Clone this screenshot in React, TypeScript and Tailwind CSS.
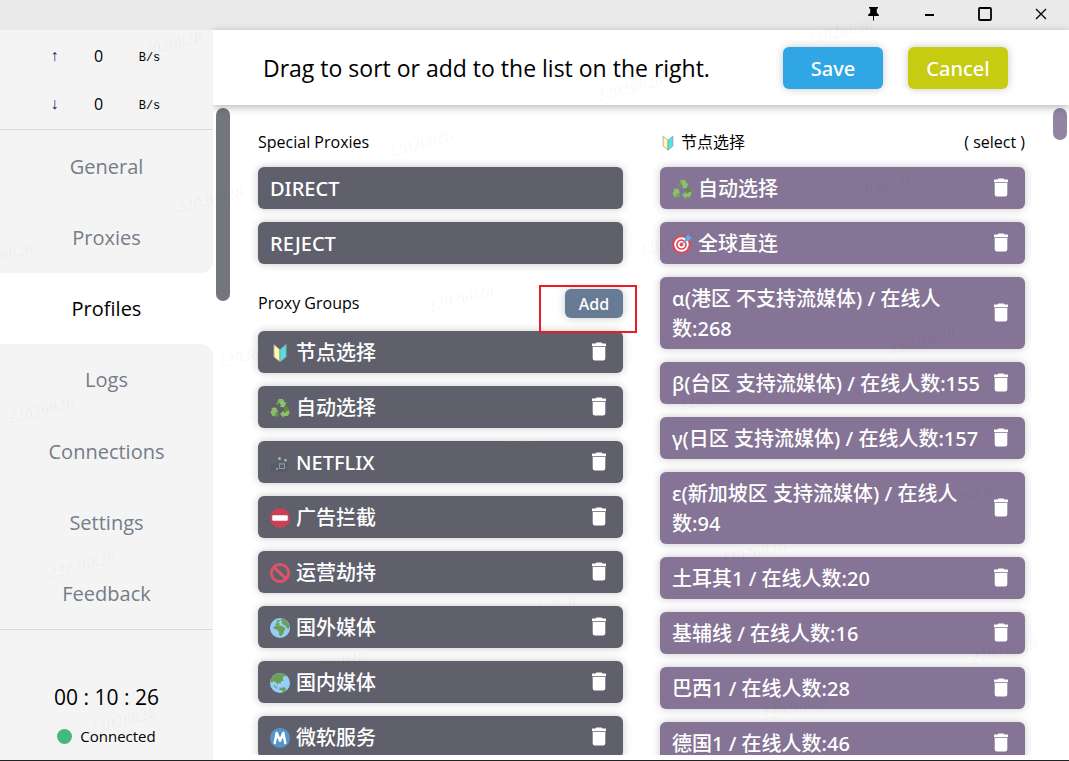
import type { ReactNode } from "react";

function Beginner() {
  return (
    <>
      <path fill="#fffcab" stroke="#8a99a3" strokeWidth="1.6" d="M7 2.5 18 12v22L7 25z" />
      <path fill="#50e3dc" stroke="#8a99a3" strokeWidth="1.6" d="M29 2.5 18 12v22l11-9z" />
    </>
  );
}

function Recycle() {
  return (
    <>
      <path fill="#5c913b" d="m11 10 4.500-8h7l-3 1.500-5.500 9.500zM34.500 22 31 15l-6.500 3.500 3.500 6.500h6zM5 33l-4-7 1-5 6.500 3.500 2.500 3-1 5.500z" />
      <path fill="#8cc06c" d="M15.500 2H23l4 6.500 3-1.500-4 9.500-9-.500 3-2-4.500-7.500zM28 25l6.500-3 .500 5-3 5.500h-7v3.500l-7-7 7-6.500V26h3zM5 33l-4-7 3.500-6L1.500 18 11 17l4 9-3-1.500-4 7z" />
      <path fill="#77b255" d="m11 10 4.500-8 4 2-5.500 9.500zM6 26h9v7.500H6z" opacity=".55" />
    </>
  );
}

function Camera() {
  return (
    <>
      <path fill="#3e4f57" opacity=".25" d="m2 18 8 4v8l-8 4zM10 18h23v14a2 2 0 0 1-2 2H12a2 2 0 0 1-2-2z" />
      <circle cx="17" cy="10" r="6.500" fill="#586069" />
      <circle cx="28" cy="13" r="5.500" fill="#586069" />
      <circle cx="17" cy="10" r="2.800" fill="#a5b1bb" />
      <circle cx="28" cy="13" r="2.500" fill="#a5b1bb" />
      <path fill="none" stroke="#8899a6" strokeWidth="2" d="M17 19.500h9v8.500h-9z" />
      <path fill="#a5b1bb" d="M11 27h3v3h-3z" />
    </>
  );
}

function NoEntry() {
  return (
    <>
      <circle cx="18" cy="18" r="18" fill="#cb4054" />
      <rect x="4" y="13" width="28" height="10" rx="2" fill="#fff" />
    </>
  );
}

function Prohibited() {
  return (
    <path
      fill="#e15266"
      d="M18 0C8.059 0 0 8.059 0 18s8.059 18 18 18 18-8.059 18-18S27.941 0 18 0zm13 18c0 2.565-.753 4.950-2.035 6.965L11.036 7.036C13.050 5.753 15.435 5 18 5c7.180 0 13 5.821 13 13zM5 18c0-2.565.753-4.950 2.036-6.964l17.929 17.929C22.950 30.247 20.565 31 18 31c-7.179 0-13-5.820-13-13z"
    />
  );
}

function GlobeAfrica() {
  return (
    <>
      <circle cx="18" cy="18" r="18" fill="#93cff6" />
      <path fill="#6d9f58" d="M20 1c8 1 13 7 15 14l-1 5-3-1-3-5-4-2-3-3 1-3-3-2zM12 5l4-2 2 2-3 3-3 1zM8 15c3-2 7-3 11-1 2 1 5 1 7 3l2 3-3 4-1 4-4 5-3-1-1-7-3-4-5-1-2-3z" />
      <path fill="#6d9f58" d="m10 10 5-1 4 2-5 2-4 0z" />
    </>
  );
}

function GlobeAsia() {
  return (
    <>
      <circle cx="18" cy="18" r="18" fill="#93cff6" />
      <path fill="#6d9f58" d="M4 8C8 2 15-1 22 1c5 1 6 3 7 5l-4 0-2 3 1 5-4 1-1 4-4-1-1 4-3-5-4-2-4 2-3-2c0-4 1-5 4-7zM8 21l3 4 4 3-5-1-3-4zM17 26l4 1 3-2 4 2 1 4c-2 2-3 3-5 3l-3-3-4-1z" />
    </>
  );
}

function CircledM() {
  return (
    <>
      <circle cx="18" cy="18" r="18" fill="#5595cb" />
      <path fill="none" stroke="#fff" strokeWidth="4.500" strokeLinecap="round" strokeLinejoin="round" d="m8.500 27 3.500-18 6 14 6-14 3.500 18" />
    </>
  );
}

function Target() {
  return (
    <>
      <circle cx="17" cy="19" r="17" fill="#dd4a5e" />
      <circle cx="17" cy="19" r="13" fill="#fff" />
      <circle cx="17" cy="19" r="9.500" fill="#dd4a5e" />
      <circle cx="17" cy="19" r="6.500" fill="#fff" />
      <circle cx="17" cy="19" r="3.500" fill="#dd4a5e" />
      <path stroke="#8a93a8" strokeWidth="2" d="m17 19 10-10" />
      <path fill="#5daeea" d="m24 12-1-5 7-7 1 5 5 1-7 7z" />
    </>
  );
}

function Emoji({ children, className = "size-5" }: { children: ReactNode; className?: string }) {
  return (
    <svg viewBox="0 0 36 36" className={`${className} shrink-0`} aria-hidden="true">
      {children}
    </svg>
  );
}

function Trash() {
  return (
    <svg viewBox="0 0 16 20" className="h-5 w-4" fill="currentColor" aria-hidden="true">
      <path d="M5.500.5h5l1 1h3c.3 0 .5.200.5.500v2.300H1V2c0-.3.200-.5.500-.5h3z" />
      <path d="M1.700 4.900h12.600v11.400a2.200 2.200 0 0 1-2.200 2.200H3.900a2.200 2.200 0 0 1-2.200-2.200z" />
    </svg>
  );
}

type Entry = { name: string; icon?: ReactNode };

function EntryRow({ entry, color, removable = true }: { entry: Entry; color: string; removable?: boolean }) {
  return (
    <li className={`${color} flex items-center rounded-md pr-4 pl-3 text-white shadow-[0_0_8px_rgba(0,0,0,0.22)]`}>
      <span className="flex flex-1 items-center gap-[6px] pt-[7px] pb-[5px] font-['Noto_Sans','Noto_Sans_CJK_SC',sans-serif] text-xl leading-[30px] font-medium">
        {entry.icon && <Emoji>{entry.icon}</Emoji>}
        <span>{entry.name}</span>
      </span>
      {removable && (
        <button type="button" aria-label={`Remove ${entry.name}`} className="shrink-0">
          <Trash />
        </button>
      )}
    </li>
  );
}

const special: Entry[] = [{ name: "DIRECT" }, { name: "REJECT" }];

const groups: Entry[] = [
  { name: "节点选择", icon: <Beginner /> },
  { name: "自动选择", icon: <Recycle /> },
  { name: "NETFLIX", icon: <Camera /> },
  { name: "广告拦截", icon: <NoEntry /> },
  { name: "运营劫持", icon: <Prohibited /> },
  { name: "国外媒体", icon: <GlobeAfrica /> },
  { name: "国内媒体", icon: <GlobeAsia /> },
  { name: "微软服务", icon: <CircledM /> },
];

const selected: Entry[] = [
  { name: "自动选择", icon: <Recycle /> },
  { name: "全球直连", icon: <Target /> },
  { name: "α(港区 不支持流媒体) / 在线人数:268" },
  { name: "β(台区 支持流媒体) / 在线人数:155" },
  { name: "γ(日区 支持流媒体) / 在线人数:157" },
  { name: "ε(新加坡区 支持流媒体) / 在线人数:94" },
  { name: "土耳其1 / 在线人数:20" },
  { name: "基辅线 / 在线人数:16" },
  { name: "巴西1 / 在线人数:28" },
  { name: "德国1 / 在线人数:46" },
];

const tabs = ["General", "Proxies", "Profiles", "Logs", "Connections", "Settings", "Feedback"];
const active = 2;

function tabShape(i: number) {
  if (i === active) return "bg-white text-black";
  if (i === active - 1) return "rounded-br-xl bg-[#f4f4f4] text-[#757d88]";
  if (i === active + 1) return "rounded-tr-xl bg-[#f4f4f4] text-[#757d88]";
  return "bg-[#f4f4f4] text-[#757d88]";
}

function TitleBar() {
  return (
    <div className="flex h-[30px] shrink-0 items-start justify-end bg-[#eaeaea]">
      <button type="button" aria-label="Pin" className="flex h-7 w-14 items-center justify-center">
        <svg viewBox="0 0 12 14" className="h-[14px] w-3" aria-hidden="true">
          <path d="M2 0h9v1.500H9.800V6c1.200.600 1.900 1.400 2.200 3H7v4.500H6V9H1c.3-1.600 1-2.400 2.200-3V1.500H2z" />
        </svg>
      </button>
      <button type="button" aria-label="Minimize" className="flex h-7 w-14 items-center justify-center">
        <svg viewBox="0 0 14 14" className="size-[14px]" aria-hidden="true">
          <path d="M3 7h9v2H3z" />
        </svg>
      </button>
      <button type="button" aria-label="Maximize" className="flex h-7 w-14 items-center justify-center">
        <svg viewBox="0 0 14 14" className="size-[14px]" aria-hidden="true">
          <rect x="1" y="1" width="12" height="12" rx="1" fill="none" stroke="#000" strokeWidth="1.800" />
        </svg>
      </button>
      <button type="button" aria-label="Close" className="flex h-7 w-14 items-center justify-center">
        <svg viewBox="0 0 14 14" className="size-[14px]" aria-hidden="true">
          <path d="m2 2 10 10M12 2 2 12" stroke="#000" strokeWidth="1.300" />
        </svg>
      </button>
    </div>
  );
}

function Speed({ arrow }: { arrow: string }) {
  return (
    <div className="grid h-12 grid-cols-[28px_60px_42px] items-center justify-center text-center">
      <span className="font-['Liberation_Sans'] text-base text-[#1c1c66]">{arrow}</span>
      <span className="text-base">0</span>
      <span className="pt-[3px] font-['Liberation_Mono'] text-xs">B/s</span>
    </div>
  );
}

function Sidebar() {
  return (
    <aside className="relative z-20 flex w-[213px] shrink-0 flex-col">
      <div className="h-[100px] border-b border-[#dbdbdb] bg-[#f4f4f4] pt-[2px] pr-[2px]">
        <Speed arrow="↑" />
        <Speed arrow="↓" />
      </div>
      <nav className="flex flex-1 flex-col bg-white">
        {tabs.map((tab, i) => (
          <a key={tab} href={`#${tab.toLowerCase()}`} className={`flex flex-1 items-center justify-center pt-[2px] text-xl ${tabShape(i)}`}>
            {tab}
          </a>
        ))}
      </nav>
      <div className="flex h-[131px] flex-col items-center border-t border-[#dbdbdb] bg-[#f4f4f4] pt-[52px]">
        <p className="text-[21px] leading-[30px]">00 : 10 : 26</p>
        <p className="mt-3 flex items-center gap-2 text-[15px] leading-6">
          <span className="size-[15px] rounded-full bg-[#43b883]" />
          Connected
        </p>
      </div>
    </aside>
  );
}

function Watermark() {
  const marks: { x: number; y: number }[] = [];
  for (let i = -3; i <= 8; i++) {
    for (let j = -3; j <= 6; j++) {
      const x = 176 + 41 * i + 210 * j;
      const y = 188 + 155 * i - 56 * j;
      if (x > -50 && x < 1040 && y > -12 && y < 750) marks.push({ x, y });
    }
  }
  return (
    <div className="pointer-events-none absolute inset-0 z-30 overflow-hidden" aria-hidden="true">
      {marks.map(({ x, y }) => (
        <span
          key={`${x},${y}`}
          className="absolute -rotate-14 font-['Liberation_Serif'] text-[17px] leading-6 font-bold text-black/3 italic"
          style={{ left: x, top: y }}
        >
          22026828
        </span>
      ))}
    </div>
  );
}

export default function App() {
  return (
    <div className="relative flex h-screen flex-col overflow-hidden border-b border-[#222] bg-white font-['Open_Sans','Noto_Sans_CJK_SC',sans-serif] text-black">
      <TitleBar />
      <div className="flex min-h-0 flex-1">
        <Sidebar />
        <main className="flex min-w-0 flex-1 flex-col">
          <header className="relative z-10 flex h-[75px] shrink-0 items-center bg-white pr-[61px] pl-[50px] shadow-[0_2px_8px_rgba(0,0,0,0.3)]">
            <h1 className="flex-1 pt-[2px] text-[23px] whitespace-nowrap">Drag to sort or add to the list on the right.</h1>
            <div className="flex gap-[25px] font-['Noto_Sans'] text-xl font-medium text-white">
              <button type="button" className="h-[42px] w-[100px] rounded-md bg-[#30a7e4] pt-[2px] shadow-[0_0_8px_rgba(0,0,0,0.22)]">
                Save
              </button>
              <button type="button" className="h-[42px] w-[100px] rounded-md bg-[#c7cb11] pt-[2px] shadow-[0_0_8px_rgba(0,0,0,0.22)]">
                Cancel
              </button>
            </div>
          </header>
          <div className="mb-[5px] flex min-h-0 flex-1 overflow-hidden pr-[2px] pl-[3px]">
            <div className="mt-[3px] h-[193px] w-[14px] shrink-0 rounded-full bg-[#73767f]" />
            <section className="ml-7 min-w-0 flex-1 pt-[23px]">
              <h2 className="mb-[10px] text-base leading-[29px]">Special Proxies</h2>
              <ul className="flex flex-col gap-[13px]">
                {special.map((entry) => (
                  <EntryRow key={entry.name} entry={entry} color="bg-[#60606c]" removable={false} />
                ))}
              </ul>
              <div className="mt-[25px] mb-[13px] flex items-center justify-between">
                <h2 className="text-base leading-[29px]">Proxy Groups</h2>
                <div className="relative">
                  <button type="button" className="block h-[29px] w-[58px] rounded-md bg-[#687b95] font-['Noto_Sans'] text-base font-medium text-white shadow-[0_0_8px_rgba(0,0,0,0.22)]">
                    Add
                  </button>
                  <span className="pointer-events-none absolute -top-1 -right-[14px] -bottom-[15px] -left-[26px] border-2 border-[#ed1c24]" />
                </div>
              </div>
              <ul className="flex flex-col gap-[13px]">
                {groups.map((entry) => (
                  <EntryRow key={entry.name} entry={entry} color="bg-[#60606c]" />
                ))}
              </ul>
            </section>
            <section className="ml-[37px] min-w-0 flex-1 pt-[23px]">
              <div className="mb-[10px] flex items-center justify-between text-base leading-[29px]">
                <h2 className="flex items-center gap-[5px]">
                  <Emoji className="size-4">
                    <Beginner />
                  </Emoji>
                  节点选择
                </h2>
                <span>( select )</span>
              </div>
              <ul className="flex flex-col gap-[13px]">
                {selected.map((entry) => (
                  <EntryRow key={entry.name} entry={entry} color="bg-[#857496]" />
                ))}
              </ul>
            </section>
            <div className="mt-[3px] ml-7 h-8 w-[14px] shrink-0 rounded-full bg-[#9384a3]" />
          </div>
        </main>
      </div>
      <Watermark />
    </div>
  );
}
